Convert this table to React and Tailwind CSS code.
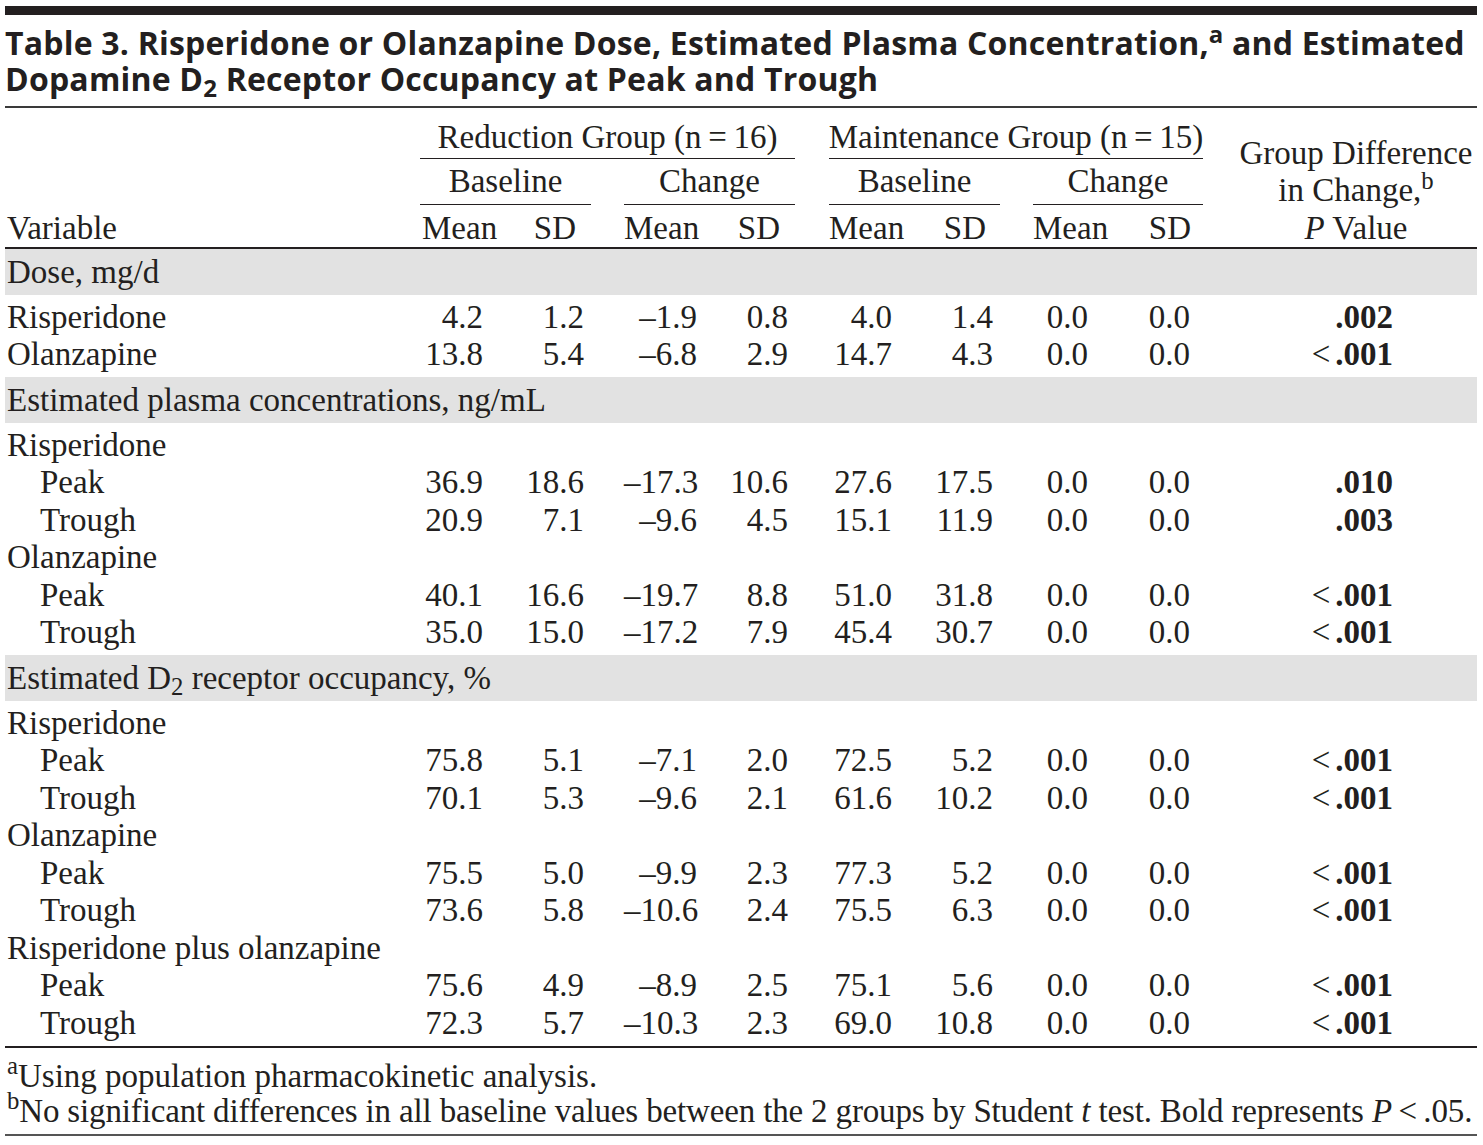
import React from "react";

const GRID =
  "grid grid-cols-[415px_80px_91px_33px_81px_90px_34px_81px_90px_33px_80px_90px_274px]";

function PVal({ p }) {
  if (!p) return null;
  if (p.startsWith("<")) {
    return (
      <span>
        <span>&lt;</span>
        <span className="ml-[5px] font-bold">{p.slice(1)}</span>
      </span>
    );
  }
  return <span className="font-bold">{p}</span>;
}

function DataRow({ label, indent, v = [], p }) {
  return (
    <div className={`${GRID} h-[37.5px] leading-[37.5px]`}>
      <div className={indent ? "pl-[35px]" : "pl-[2px]"}>{label}</div>
      <div className="text-right pr-[17px]">{v[0]}</div>
      <div className="text-right pr-[7px]">{v[1]}</div>
      <div />
      <div className="text-right pr-[8px]">{v[2]}</div>
      <div className="text-right pr-[7px]">{v[3]}</div>
      <div />
      <div className="text-right pr-[18px]">{v[4]}</div>
      <div className="text-right pr-[7px]">{v[5]}</div>
      <div />
      <div className="text-right pr-[25px]">{v[6]}</div>
      <div className="text-right pr-[13px]">{v[7]}</div>
      <div className="text-right pr-[84px]">
        <PVal p={p} />
      </div>
    </div>
  );
}

function Band({ children }) {
  return (
    <div className="bg-[#e2e2e2] h-[46px] leading-[46px] pl-[2px]">
      {children}
    </div>
  );
}

const sections = [
  {
    title: "Dose, mg/d",
    rows: [
      { label: "Risperidone", v: ["4.2", "1.2", "–1.9", "0.8", "4.0", "1.4", "0.0", "0.0"], p: ".002" },
      { label: "Olanzapine", v: ["13.8", "5.4", "–6.8", "2.9", "14.7", "4.3", "0.0", "0.0"], p: "<.001" },
    ],
  },
  {
    title: "Estimated plasma concentrations, ng/mL",
    rows: [
      { label: "Risperidone" },
      { label: "Peak", indent: true, v: ["36.9", "18.6", "–17.3", "10.6", "27.6", "17.5", "0.0", "0.0"], p: ".010" },
      { label: "Trough", indent: true, v: ["20.9", "7.1", "–9.6", "4.5", "15.1", "11.9", "0.0", "0.0"], p: ".003" },
      { label: "Olanzapine" },
      { label: "Peak", indent: true, v: ["40.1", "16.6", "–19.7", "8.8", "51.0", "31.8", "0.0", "0.0"], p: "<.001" },
      { label: "Trough", indent: true, v: ["35.0", "15.0", "–17.2", "7.9", "45.4", "30.7", "0.0", "0.0"], p: "<.001" },
    ],
  },
  {
    title: (
      <>
        Estimated D<sub>2</sub> receptor occupancy, %
      </>
    ),
    rows: [
      { label: "Risperidone" },
      { label: "Peak", indent: true, v: ["75.8", "5.1", "–7.1", "2.0", "72.5", "5.2", "0.0", "0.0"], p: "<.001" },
      { label: "Trough", indent: true, v: ["70.1", "5.3", "–9.6", "2.1", "61.6", "10.2", "0.0", "0.0"], p: "<.001" },
      { label: "Olanzapine" },
      { label: "Peak", indent: true, v: ["75.5", "5.0", "–9.9", "2.3", "77.3", "5.2", "0.0", "0.0"], p: "<.001" },
      { label: "Trough", indent: true, v: ["73.6", "5.8", "–10.6", "2.4", "75.5", "6.3", "0.0", "0.0"], p: "<.001" },
      { label: "Risperidone plus olanzapine" },
      { label: "Peak", indent: true, v: ["75.6", "4.9", "–8.9", "2.5", "75.1", "5.6", "0.0", "0.0"], p: "<.001" },
      { label: "Trough", indent: true, v: ["72.3", "5.7", "–10.3", "2.3", "69.0", "10.8", "0.0", "0.0"], p: "<.001" },
    ],
  },
];

export default function App() {
  return (
    <div className="w-[1483px] min-h-[1145px] bg-white text-[#231f20] font-['Liberation_Serif',serif] text-[33px] whitespace-nowrap">
      <div className="ml-[5px] w-[1472px] pt-[6px]">
        {/* top bar */}
        <div className="h-[9px] bg-[#231f20]" />

        {/* title */}
        <div className="pt-[10px] pb-[9px] border-b-2 border-[#3a3a3a] font-['Open_Sans',sans-serif] font-bold text-[32px] leading-[36px] tracking-[0.2px]">
          Table 3. Risperidone or Olanzapine Dose, Estimated Plasma Concentration,<sup>a</sup> and
          Estimated
          <br />
          Dopamine D<sub>2</sub> Receptor Occupancy at Peak and Trough
        </div>

        {/* column headers */}
        <div className={`${GRID} grid-rows-[51px_46px_42px] leading-[37.5px] border-b-[2.5px] border-[#231f20]`}>
          <div className="col-start-1 row-start-1 row-span-3 flex items-end pl-[2px]">Variable</div>
          <div className="col-start-2 col-span-5 row-start-1 flex items-end justify-center border-b-[1.5px] border-[#231f20] pb-[2px]">
            Reduction Group (n{"\u2009"}={"\u2009"}16)
          </div>
          <div className="col-start-8 col-span-5 row-start-1 flex items-end justify-center border-b-[1.5px] border-[#231f20] pb-[2px]">
            Maintenance Group (n{"\u2009"}={"\u2009"}15)
          </div>
          <div className="col-start-13 row-start-1 row-span-3 flex flex-col items-center justify-end pl-[32px]">
            <span>Group Difference</span>
            <span>
              in Change,<sup>b</sup>
            </span>
            <span>
              <i>P</i> Value
            </span>
          </div>

          <div className="col-start-2 col-span-2 row-start-2 flex items-end justify-center border-b-[1.5px] border-[#231f20] pb-[4px]">
            Baseline
          </div>
          <div className="col-start-5 col-span-2 row-start-2 flex items-end justify-center border-b-[1.5px] border-[#231f20] pb-[4px]">
            Change
          </div>
          <div className="col-start-8 col-span-2 row-start-2 flex items-end justify-center border-b-[1.5px] border-[#231f20] pb-[4px]">
            Baseline
          </div>
          <div className="col-start-11 col-span-2 row-start-2 flex items-end justify-center border-b-[1.5px] border-[#231f20] pb-[4px]">
            Change
          </div>

          <div className="col-start-2 row-start-3 flex items-end pl-[2px]">Mean</div>
          <div className="col-start-3 row-start-3 flex items-end justify-end pr-[15px]">SD</div>
          <div className="col-start-5 row-start-3 flex items-end">Mean</div>
          <div className="col-start-6 row-start-3 flex items-end justify-end pr-[15px]">SD</div>
          <div className="col-start-8 row-start-3 flex items-end">Mean</div>
          <div className="col-start-9 row-start-3 flex items-end justify-end pr-[14px]">SD</div>
          <div className="col-start-11 row-start-3 flex items-end">Mean</div>
          <div className="col-start-12 row-start-3 flex items-end justify-end pr-[12px]">SD</div>
        </div>

        {/* body */}
        <div className="border-b-[2.5px] border-[#231f20]">
          {sections.map((s, i) => (
            <div key={i}>
              <Band>{s.title}</Band>
              <div className="py-[3.5px]">
                {s.rows.map((r, j) => (
                  <DataRow key={j} {...r} />
                ))}
              </div>
            </div>
          ))}
        </div>

        {/* footnotes */}
        <div className="pt-[11px] pb-[5px] leading-[35px] pl-[2px] border-b-2 border-[#555]">
          <div>
            <sup>a</sup>Using population pharmacokinetic analysis.
          </div>
          <div className="tracking-[-0.15px]">
            <sup>b</sup>No significant differences in all baseline values between the 2 groups by
            Student <i>t</i> test. Bold represents <i>P</i>
            {"\u2009"}&lt;{"\u2009"}.05.
          </div>
        </div>
      </div>
    </div>
  );
}
